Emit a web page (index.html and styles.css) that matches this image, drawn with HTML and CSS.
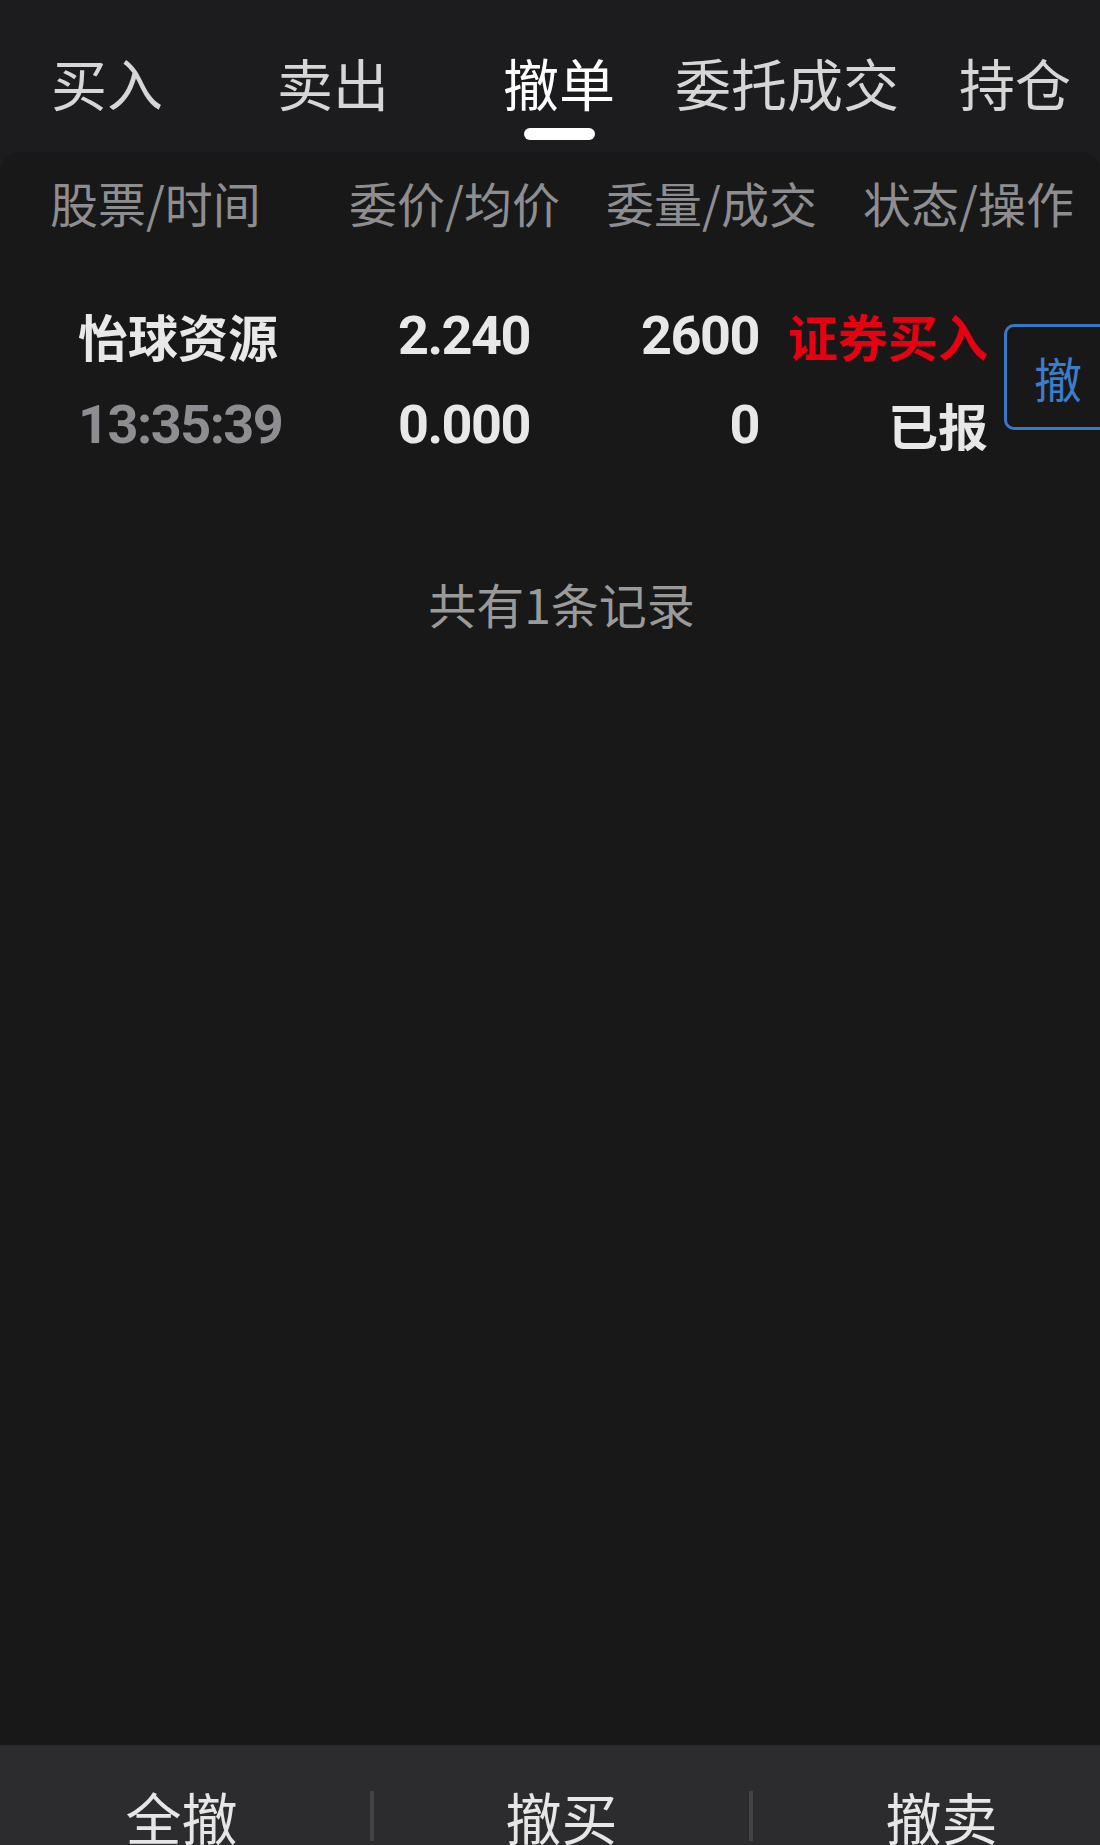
FILE: index.html
```html
<!DOCTYPE html>
<html lang="zh-CN">
<head>
<meta charset="utf-8">
<title>撤单</title>
<link rel="stylesheet" href="styles.css">
</head>
<body>
<div class="app">
  <nav class="tabbar">
    <div class="tabs">
      <div class="tab"><span class="tab-label">买入</span></div>
      <div class="tab"><span class="tab-label">卖出</span></div>
      <div class="tab active"><span class="tab-label">撤单</span><span class="indicator"></span></div>
      <div class="tab tab-wide"><span class="tab-label">委托成交</span></div>
      <div class="tab"><span class="tab-label">持仓</span></div>
    </div>
  </nav>
  <main class="main">
    <div class="head">
      <div class="h h-first">股票/时间</div>
      <div class="h">委价/均价</div>
      <div class="h">委量/成交</div>
      <div class="h">状态/操作</div>
    </div>
    <div class="order">
      <div class="cell c-name">
        <div class="l1 name">怡球资源</div>
        <div class="l2 time">13:35:39</div>
      </div>
      <div class="cell c-price">
        <div class="l1 num">2.240</div>
        <div class="l2 num">0.000</div>
      </div>
      <div class="cell c-qty">
        <div class="l1 num">2600</div>
        <div class="l2 num">0</div>
      </div>
      <div class="cell c-status">
        <div class="l1 buy">证券买入</div>
        <div class="l2 state">已报</div>
      </div>
      <button class="cancel">撤</button>
    </div>
    <div class="count">共有1条记录</div>
  </main>
  <footer class="actions">
    <div class="act act-first">全撤</div>
    <span class="sep"></span>
    <div class="act act-mid">撤买</div>
    <span class="sep"></span>
    <div class="act act-last">撤卖</div>
  </footer>
</div>
</body>
</html>
```

FILE: styles.css
```css
html, body {
  margin: 0;
  padding: 0;
}
body {
  width: 1100px;
  height: 1845px;
  overflow: hidden;
  background: #1c1c1e;
  font-family: "Noto Sans CJK SC", "Noto Sans", sans-serif;
}
.app {
  display: flex;
  flex-direction: column;
  height: 1887px;
  background: #1c1c1e;
}

/* top tabs */
.tabbar {
  height: 152px;
  flex: 0 0 152px;
  overflow: hidden;
  background: #1c1c1e;
}
.tabs {
  display: flex;
  margin-left: -6px;
}
.tab {
  flex: 0 0 226px;
  display: flex;
  flex-direction: column;
  align-items: center;
  padding-top: 50px;
}
.tab-wide {
  flex-basis: 230px;
}
.tab-label {
  font-size: 56px;
  line-height: 64px;
  color: #d6d6d6;
  white-space: nowrap;
}
.tab.active .tab-label {
  color: #ffffff;
}
.indicator {
  display: block;
  width: 71px;
  height: 12px;
  margin-top: 14px;
  border-radius: 6px;
  background: #ffffff;
}

/* main */
.main {
  flex: 1 1 auto;
  background: #181818;
  border-radius: 20px 20px 0 0;
  overflow: hidden;
}
.head {
  display: grid;
  grid-template-columns: 326px 257px 257px 257px;
  padding-top: 16px;
}
.h {
  font-size: 48px;
  line-height: 68px;
  color: #8e8e92;
  text-align: center;
  white-space: nowrap;
}
.h-first {
  text-align: left;
  padding-left: 50px;
}

.order {
  display: flex;
  align-items: flex-start;
  padding-left: 78px;
  margin-top: 55px;
  width: 1200px;
}
.cell {
  flex: 0 0 auto;
  display: flex;
  flex-direction: column;
}
.c-name { width: 250px; text-align: left; }
.c-price { width: 202px; text-align: right; }
.c-qty { width: 229px; text-align: right; }
.c-status { width: 229px; text-align: right; }
.l1, .l2 {
  height: 89px;
  line-height: 89px;
  white-space: nowrap;
  font-weight: 700;
}
.name {
  font-size: 50px;
  color: #e8e8e8;
}
.time {
  font-family: "Roboto", "Noto Sans CJK SC", sans-serif;
  font-size: 54px;
  letter-spacing: -1.5px;
  color: #8e8e92;
}
.num {
  font-family: "Roboto", "Noto Sans CJK SC", sans-serif;
  font-size: 54px;
  letter-spacing: -1.5px;
  color: #e8e8e8;
}
.buy {
  font-size: 50px;
  color: #e60012;
}
.state {
  font-size: 50px;
  color: #e8e8e8;
}
.cancel {
  box-sizing: border-box;
  flex: 0 0 108px;
  width: 108px;
  height: 106px;
  margin-left: 16px;
  margin-top: 33px;
  padding: 0;
  border: 3px solid #3a78c4;
  border-radius: 10px;
  background: transparent;
  color: #3d7cc9;
  font-family: "Noto Sans CJK SC", sans-serif;
  font-size: 48px;
  line-height: 1;
}

.count {
  margin-top: 104px;
  padding-left: 23px;
  text-align: center;
  font-size: 48px;
  line-height: 60px;
  color: #9a9a9a;
}

/* bottom actions */
.actions {
  flex: 0 0 142px;
  height: 142px;
  display: flex;
  align-items: center;
  margin-left: -7px;
  background: #2c2c2e;
}
.act {
  flex: 0 0 auto;
  text-align: center;
  font-size: 56px;
  line-height: 64px;
  color: #e6e6e6;
}
.act-first { width: 377px; }
.act-mid { width: 375px; }
.act-last { width: 377px; }
.sep {
  flex: 0 0 4px;
  width: 4px;
  height: 50px;
  background: #434345;
}
```
